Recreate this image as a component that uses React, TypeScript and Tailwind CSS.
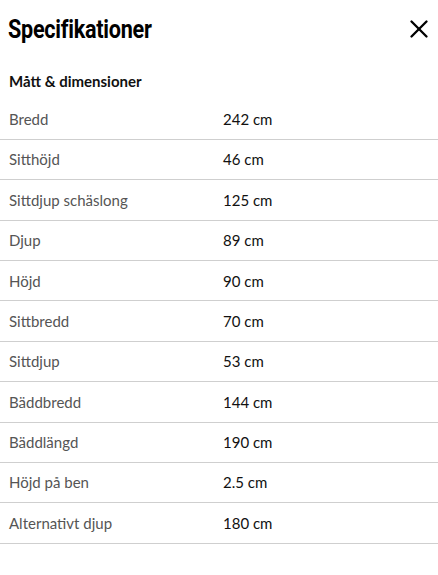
import { X } from 'lucide-react'

const rows = [
  { label: 'Bredd', value: '242 cm' },
  { label: 'Sitthöjd', value: '46 cm' },
  { label: 'Sittdjup schäslong', value: '125 cm' },
  { label: 'Djup', value: '89 cm' },
  { label: 'Höjd', value: '90 cm' },
  { label: 'Sittbredd', value: '70 cm' },
  { label: 'Sittdjup', value: '53 cm' },
  { label: 'Bäddbredd', value: '144 cm' },
  { label: 'Bäddlängd', value: '190 cm' },
  { label: 'Höjd på ben', value: '2.5 cm' },
  { label: 'Alternativt djup', value: '180 cm' },
]

export default function App() {
  return (
    <div className="w-[438px] h-[575px] bg-white font-['Lato',sans-serif] overflow-hidden">
      <div className="flex items-center justify-between pl-[8px] pr-[4px] h-[58px]">
        <h1 className="inline-block origin-left scale-x-[0.83] text-[26px] leading-none font-bold tracking-[-0.3px] text-black font-['Roboto',sans-serif]">
          Specifikationer
        </h1>
        <X className="w-[30px] h-[30px] text-black" strokeWidth={1.9} />
      </div>
      <h2 className="pl-[9px] mt-[12px] text-[15px] font-bold text-[#111]">
        Mått &amp; dimensioner
      </h2>
      <div className="mt-[7px]">
        {rows.map((row, index) => (
          <div
            key={index}
            className="grid grid-cols-[214px_1fr] items-center h-[40.4px] border-b border-[#cfcfcf] pl-[9px] text-[15px]"
          >
            <span className="text-[#555]">{row.label}</span>
            <span className="text-[#111]">{row.value}</span>
          </div>
        ))}
      </div>
    </div>
  )
}
